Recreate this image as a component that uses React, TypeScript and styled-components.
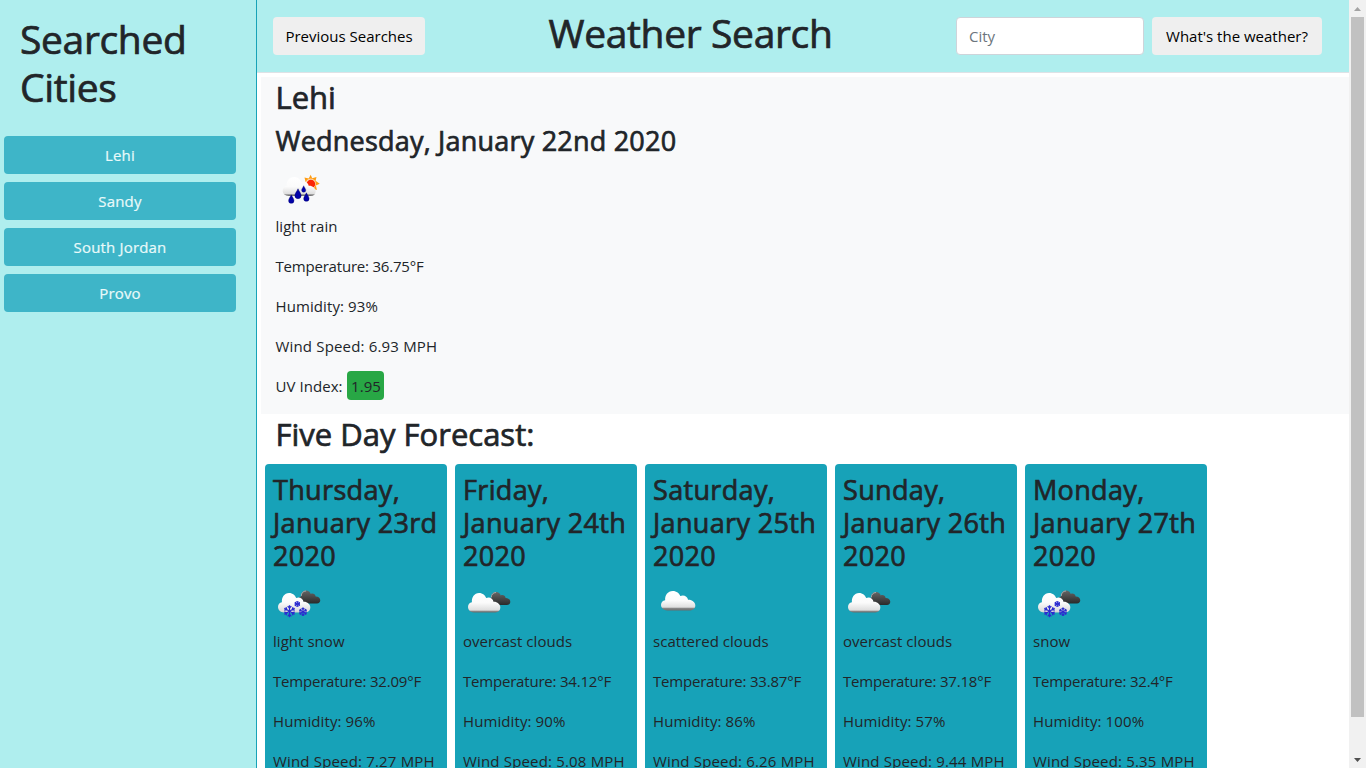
import React from "react";
import styled, { createGlobalStyle } from "styled-components";

const GlobalStyle = createGlobalStyle`
  * { box-sizing: border-box; }
  html, body { margin: 0; height: 768px; overflow: hidden; }
  body {
    font-family: "Open Sans", "Noto Sans", sans-serif;
    font-size: 15px;
    line-height: 24px;
    color: #212529;
    background: #fff;
  }
  h1, h2, h3, p { margin: 0; }
  h1, h2, h3 { -webkit-text-stroke: 0.7px currentColor; }
`;

const Page = styled.div`
  display: flex;
  width: 1366px;
  height: 768px;
  overflow: hidden;
`;

const Sidebar = styled.aside`
  flex: 0 0 257px;
  background: #afeeee;
  border-right: 1px solid #17a2b8;
`;

const Title = styled.h1`
  font-size: 39px;
  font-weight: 400;
  line-height: 48px;
  white-space: nowrap;
  letter-spacing: -0.35px;
`;

const SidebarTitle = styled(Title)`
  padding: 15px 20px 25px;
`;

const CityList = styled.nav`
  display: flex;
  flex-direction: column;
  gap: 8px;
  padding: 0 20px 0 4px;
`;

const Button = styled.button`
  height: 38px;
  padding: 0;
  border: 0;
  border-radius: 4px;
  background: #efefef;
  color: #000;
  font: inherit;
  white-space: nowrap;
`;

const CityButton = styled(Button)`
  background: #3eb5c8;
  color: #e9fafa;
  letter-spacing: 0.17px;
  -webkit-text-stroke: 0.2px currentColor;
`;

const Main = styled.main`
  flex: 1;
  min-width: 0;
  overflow: hidden;
`;

const Header = styled.header`
  display: flex;
  justify-content: space-between;
  height: 73px;
  padding: 9px 27px 0 16px;
  background: #afeeee;
  border-bottom: 1px solid #dee2e6;
`;

const PreviousButton = styled(Button)`
  width: 152px;
  margin-top: 8px;
`;

const SearchForm = styled.form`
  display: flex;
  gap: 8px;
  padding-top: 8px;
`;

const CityInput = styled.input`
  width: 188px;
  height: 38px;
  padding: 0 12px;
  border: 1px solid #ced4da;
  border-radius: 4px;
  background: #fff;
  font: inherit;
  &::placeholder { color: #6c757d; opacity: 1; }
`;

const SearchButton = styled(Button)`
  width: 170px;
`;

const Current = styled.section`
  height: 337px;
  margin: 4px 0 0 4px;
  padding: 1px 0 0 14.5px;
  background: #f8f9fa;
`;

const Heading = styled.h2`
  font-size: 31px;
  font-weight: 400;
  line-height: 38px;
`;

const DateHeading = styled.h3`
  font-size: 27px;
  font-weight: 400;
  line-height: 33px;
  letter-spacing: 0.34px;
`;

const CurrentDate = styled(DateHeading)`
  margin-top: 8px;
  letter-spacing: 0.21px;
`;

const Icon = styled.svg`
  display: block;
  width: 50px;
  height: 50px;
`;

const CurrentIcon = styled.div`
  padding: 7px 0 0;
`;

const Line = styled.p<{ $track?: number }>`
  margin-bottom: 16px;
  white-space: nowrap;
  letter-spacing: ${(p) => p.$track ?? 0.04}px;
`;

const UvBadge = styled.span`
  display: inline-block;
  height: 29px;
  margin: -3px 0;
  padding: 3px 3.5px 2px 4.5px;
  border-radius: 4px;
  background: #28a745;
`;

const ForecastTitle = styled(Heading)`
  margin: 1px 0 11px 18.5px;
`;

const Cards = styled.section`
  display: flex;
  gap: 8px;
  padding-left: 8px;
`;

const Card = styled.article`
  width: 182px;
  height: 340px;
  padding: 9px 8px;
  border-radius: 4px;
  background: #17a2b8;
`;

const CardIcon = styled.div`
  padding: 5px 0 2px;
`;

const Scrollbar = styled.div`
  display: flex;
  flex-direction: column;
  align-items: center;
  flex: 0 0 17px;
  background: #f1f1f1;
`;

const ScrollArrow = styled.svg`
  display: block;
  width: 17px;
  height: 17px;
`;

const ScrollThumb = styled.div`
  width: 13px;
  height: 700px;
  margin-bottom: 34px;
  background: #c1c1c1;
`;

const CLOUD =
  "M6 19 C2.500 19 0 16.800 0 13.800 C0 11.300 1.600 9.300 4 9 C3.500 4.300 6.500 0 11.300 0 C15 0 17.700 2.300 18.500 5 C21.700 3.400 25.500 5.200 26 8.700 C29.500 8.400 33 11 33 14.300 C33 17.300 31 19 28 19 Z";

type Kind = "rain" | "snow" | "overcast" | "scattered";

const Flake = ({ x, y, r }: { x: number; y: number; r: number }) => (
  <g transform={`translate(${x} ${y})`} stroke="#2b2bd0" strokeWidth={r > 4 ? 1.2 : 1}>
    {[0, 60, 120].map((a) => (
      <path key={a} transform={`rotate(${a})`} fill="none"
        d={`M0 ${-r}V${r}M${-r * 0.3} ${-r * 0.85}L0 ${-r * 0.5}L${r * 0.3} ${-r * 0.85}M${-r * 0.3} ${r * 0.85}L0 ${r * 0.5}L${r * 0.3} ${r * 0.85}`} />
    ))}
  </g>
);

const Drop = ({ x, y, s }: { x: number; y: number; s: number }) => (
  <path transform={`translate(${x} ${y}) scale(${s})`} fill="#0202a8" stroke="#000060" strokeWidth=".4"
    d="M0 -5 C1 -2.500 3 -.5 3 1.500 A3 3 0 0 1 -3 1.500 C-3 -.5 -1 -2.500 0 -5Z" />
);

const WeatherIcon = ({ kind, id }: { kind: Kind; id: string }) => {
  const light = `light-${id}`;
  const dark = `dark-${id}`;
  const backY = kind === "snow" ? 13.5 : 15;
  const edge = kind === "scattered" ? 0.88 : 0.93;
  return (
    <Icon viewBox="0 0 50 50">
      <defs>
        <linearGradient id={light} x1="0" y1="0" x2="0" y2="1">
          <stop offset="0" stopColor="#fff" />
          <stop offset=".5" stopColor="#fbfbfb" />
          <stop offset={edge - 0.04} stopColor="#dedede" />
          <stop offset={edge} stopColor={kind === "snow" ? "#e0e0e0" : "#8c8c8c"} />
          <stop offset="1" stopColor={kind === "snow" ? "#ccc" : "#6c6c6c"} />
        </linearGradient>
        <linearGradient id={dark} x1="0" y1="0" x2="0" y2="1">
          <stop offset="0" stopColor="#666" />
          <stop offset="1" stopColor="#2a2a2a" />
        </linearGradient>
      </defs>
      {kind === "rain" && (
        <>
          <path fill="#ff9d12" transform="translate(34.700 19.700)"
            d="M0-9 1.500-5.500 5.800-6.800 4.900-3 9 0 5.200 1.700 6.200 6.200 2.200 5 0 8.600-2 5-6.200 6-5 2-8.600 0-5.200-2-6.200-6.200-2-5.200Z" />
          <circle cx="34.700" cy="19.700" r="5.200" fill="#fcd9ae" />
          <circle cx="34.900" cy="20" r="4.300" fill="#fb2605" />
        </>
      )}
      {(kind === "snow" || kind === "overcast") && (
        <>
          <path transform={`translate(25.500 ${backY}) scale(.66 .68)`} fill={`url(#${dark})`} d={CLOUD} />
          <path transform={`translate(25.500 ${backY}) scale(.66 .68)`} fill="none" stroke="#b5b5b5" strokeWidth="1.300"
            d="M4.300 8 C4 4 7 .7 11.500 .7" />
        </>
      )}
      <path fill={`url(#${light})`} d={CLOUD}
        transform={
          kind === "scattered" ? "translate(8 14) scale(1.040 1.020)"
          : kind === "rain" ? "translate(6.700 13)"
          : "translate(5 16) scale(.98 1.020)"
        } />
      {kind === "rain" && (
        <>
          <Drop x={15.3} y={35.3} s={0.9} />
          <Drop x={22} y={30} s={1.05} />
          <Drop x={27.7} y={25.2} s={0.7} />
          <Drop x={30.4} y={33.3} s={0.9} />
        </>
      )}
      {kind === "snow" && (
        <>
          <Flake x={16.5} y={34.2} r={6} />
          <Flake x={24.3} y={27} r={3} />
          <Flake x={30} y={34.8} r={4.2} />
        </>
      )}
    </Icon>
  );
};

const cities = ["Lehi", "Sandy", "South Jordan", "Provo"];

const days: { day: string; date: string; kind: Kind; sky: string; temp: string; hum: string; wind: string }[] = [
  { day: "Thursday,", date: "January 23rd", kind: "snow", sky: "light snow", temp: "32.09", hum: "96", wind: "7.27" },
  { day: "Friday,", date: "January 24th", kind: "overcast", sky: "overcast clouds", temp: "34.12", hum: "90", wind: "5.08" },
  { day: "Saturday,", date: "January 25th", kind: "scattered", sky: "scattered clouds", temp: "33.87", hum: "86", wind: "6.26" },
  { day: "Sunday,", date: "January 26th", kind: "overcast", sky: "overcast clouds", temp: "37.18", hum: "57", wind: "9.44" },
  { day: "Monday,", date: "January 27th", kind: "snow", sky: "snow", temp: "32.4", hum: "100", wind: "5.35" },
];

const Conditions = ({ sky, temp, hum, wind }: { sky: string; temp: string; hum: string; wind: string }) => (
  <>
    <Line>{sky}</Line>
    <Line $track={-0.2}>Temperature: {temp}°F</Line>
    <Line $track={0.1}>Humidity: {hum}%</Line>
    <Line $track={0.17}>Wind Speed: {wind} MPH</Line>
  </>
);

export default function App() {
  return (
    <Page>
      <GlobalStyle />
      <Sidebar>
        <SidebarTitle>Searched<br />Cities</SidebarTitle>
        <CityList>
          {cities.map((c) => <CityButton key={c}>{c}</CityButton>)}
        </CityList>
      </Sidebar>
      <Main>
        <Header>
          <PreviousButton>Previous Searches</PreviousButton>
          <Title>Weather Search</Title>
          <SearchForm>
            <CityInput placeholder="City" />
            <SearchButton type="button">What's the weather?</SearchButton>
          </SearchForm>
        </Header>
        <Current>
          <Heading>Lehi</Heading>
          <CurrentDate>Wednesday, January 22nd 2020</CurrentDate>
          <CurrentIcon><WeatherIcon kind="rain" id="now" /></CurrentIcon>
          <Conditions sky="light rain" temp="36.75" hum="93" wind="6.93" />
          <Line $track={0.06}>UV Index: <UvBadge>1.95</UvBadge></Line>
        </Current>
        <ForecastTitle>Five Day Forecast:</ForecastTitle>
        <Cards>
          {days.map((d, i) => (
            <Card key={d.day}>
              <DateHeading>{d.day}<br />{d.date}<br />2020</DateHeading>
              <CardIcon><WeatherIcon kind={d.kind} id={`d${i}`} /></CardIcon>
              <Conditions sky={d.sky} temp={d.temp} hum={d.hum} wind={d.wind} />
            </Card>
          ))}
        </Cards>
      </Main>
      <Scrollbar>
        <ScrollArrow viewBox="0 0 17 17"><path fill="#a3a3a3" d="M5 11h7L8.500 7Z" /></ScrollArrow>
        <ScrollThumb />
        <ScrollArrow viewBox="0 0 17 17"><path fill="#505050" d="M5 7h7L8.500 11Z" /></ScrollArrow>
      </Scrollbar>
    </Page>
  );
}
